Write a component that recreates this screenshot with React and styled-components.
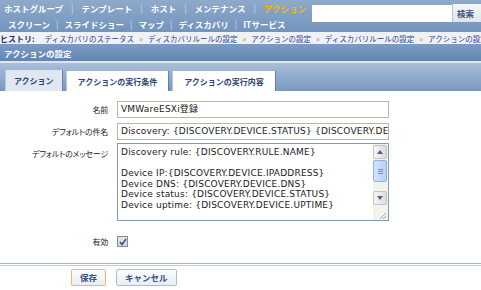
import React from 'react'
import styled, { createGlobalStyle } from 'styled-components'

const GlobalStyle = createGlobalStyle`
    body {
        margin: 0;
        background: #ffffff;
        font-family: "Noto Sans CJK JP", "DejaVu Sans", sans-serif;
    }
`

const menu1 = ['ホストグループ', 'テンプレート', 'ホスト', 'メンテナンス', 'アクション']
const menu2 = ['スクリーン', 'スライドショー', 'マップ', 'ディスカバリ', 'ITサービス']
const history = ['ディスカバリのステータス', 'ディスカバリルールの設定', 'アクションの設定', 'ディスカバリルールの設定', 'アクションの設定']
const tabs = ['アクション', 'アクションの実行条件', 'アクションの実行内容']
const message = [
    'Discovery rule: {DISCOVERY.RULE.NAME}',
    '',
    'Device IP:{DISCOVERY.DEVICE.IPADDRESS}',
    'Device DNS: {DISCOVERY.DEVICE.DNS}',
    'Device status: {DISCOVERY.DEVICE.STATUS}',
    'Device uptime: {DISCOVERY.DEVICE.UPTIME}',
]

const App = () => {
    return (
        <Page>
            <GlobalStyle />
            <TopNav>
                <Menu>
                    <MenuRow>
                        {menu1.map(m => (
                            <React.Fragment key={m}>
                                <MenuItem active={m === 'アクション'}>{m}</MenuItem>
                                <Sep>|</Sep>
                            </React.Fragment>
                        ))}
                    </MenuRow>
                    <MenuRow second>
                        {menu2.map((m, i) => (
                            <React.Fragment key={m}>
                                {i > 0 && <Sep narrow>|</Sep>}
                                <MenuItem>{m}</MenuItem>
                            </React.Fragment>
                        ))}
                    </MenuRow>
                </Menu>
                <Search>
                    <SearchInput />
                    <SearchButton>検索</SearchButton>
                </Search>
            </TopNav>
            <History>
                <HistoryLabel>ヒストリ:</HistoryLabel>
                {history.map((h, i) => (
                    <React.Fragment key={i}>
                        {i > 0 && <Arrow>»</Arrow>}
                        <HistoryLink>{h}</HistoryLink>
                    </React.Fragment>
                ))}
            </History>
            <Header>アクションの設定</Header>
            <TabBar>
                {tabs.map((t, i) => (
                    <Tab key={t} active={i === 0}>{t}</Tab>
                ))}
            </TabBar>
            <Form>
                <Label>名前</Label>
                <Input>VMWareESXi登録</Input>
                <Label>デフォルトの件名</Label>
                <Input>Discovery: {'{DISCOVERY.DEVICE.STATUS} {DISCOVERY.DEVICE.IPADDRESS}'}</Input>
                <Label>デフォルトのメッセージ</Label>
                <TextArea>
                    <TextBody>
                        {message.map((l, i) => (
                            <Line key={i}>{l || '\u00a0'}</Line>
                        ))}
                    </TextBody>
                    <Scroll>
                        <ScrollBtn>
                            <svg width="6" height="4" viewBox="0 0 6 4"><path d="M0 4 L3 0 L6 4 Z" fill="#4d6185" /></svg>
                        </ScrollBtn>
                        <Thumb>
                            <ThumbLine />
                            <ThumbLine />
                            <ThumbLine />
                        </Thumb>
                        <Track />
                        <ScrollBtn>
                            <svg width="6" height="4" viewBox="0 0 6 4"><path d="M0 0 L3 4 L6 0 Z" fill="#4d6185" /></svg>
                        </ScrollBtn>
                        <Grip>
                            <svg width="8" height="8" viewBox="0 0 8 8">
                                <path d="M7 1 L1 7 M7 4 L4 7" stroke="#a8a8a0" strokeWidth="1" />
                            </svg>
                        </Grip>
                    </Scroll>
                </TextArea>
                <CheckLabel>有効</CheckLabel>
                <CheckRow>
                    <Check>
                        <svg width="8" height="8" viewBox="0 0 8 8">
                            <path d="M1 4 L3 6.5 L7 1" stroke="#2b4ea8" strokeWidth="1.5" fill="none" />
                        </svg>
                    </Check>
                </CheckRow>
            </Form>
            <Footer>
                <Button primary>保存</Button>
                <Button>キャンセル</Button>
            </Footer>
        </Page>
    )
}

export default App

const Page = styled.div`
    width: 481px;
    height: 290px;
    overflow: hidden;
    background: #ffffff;
`
const TopNav = styled.div`
    display: flex;
    align-items: flex-start;
    height: 32px;
    background: linear-gradient(#8eaacb, #7394bc);
`
const Menu = styled.div`
    width: 312px;
    display: flex;
    flex-direction: column;
`
const MenuRow = styled.div`
    display: flex;
    align-items: center;
    height: 16px;
    padding-left: ${p => (p.second ? '8px' : '4px')};
`
const MenuItem = styled.span`
    font-size: 8.5px;
    font-weight: bold;
    color: ${p => (p.active ? '#f5b800' : '#ffffff')};
    white-space: nowrap;
`
const Sep = styled.span`
    font-size: 9px;
    color: #c9d7e8;
    padding: 0 ${p => (p.narrow ? '6px' : '8px')};
`
const Search = styled.div`
    display: flex;
    margin-top: 4px;
    height: 18px;
`
const SearchInput = styled.div`
    width: 140px;
    background: #ffffff;
    border-top: 1px solid #8da4c2;
`
const SearchButton = styled.div`
    width: 29px;
    background: linear-gradient(#f4f6f9, #dfe5ec);
    border-left: 1px solid #b8c4d4;
    color: #3a5378;
    font-size: 8.5px;
    font-weight: bold;
    display: flex;
    align-items: center;
    padding-left: 4px;
`
const History = styled.div`
    display: flex;
    align-items: center;
    height: 12px;
    background: #eef2f7;
    white-space: nowrap;
    overflow: hidden;
`
const HistoryLabel = styled.span`
    font-size: 8px;
    font-weight: bold;
    color: #1e2f6e;
    margin-right: 10px;
`
const HistoryLink = styled.span`
    font-size: 7.5px;
    color: #2f3c8a;
`
const Arrow = styled.span`
    font-size: 8px;
    color: #c58a4a;
    margin: 0 5px;
`
const Header = styled.div`
    height: 17px;
    display: flex;
    align-items: center;
    padding-left: 4px;
    background: linear-gradient(#7c9cc3, #6184b1);
    color: #ffffff;
    font-size: 8.5px;
    font-weight: bold;
    border-bottom: 2px solid #dbe4ef;
`
const TabBar = styled.div`
    display: flex;
    align-items: flex-end;
    gap: 3px;
    height: 28px;
    padding-left: 5px;
    background: linear-gradient(#a9bfd9, #7898c0);
`
const Tab = styled.div`
    height: ${p => (p.active ? '21px' : '20px')};
    padding: 0 ${p => (p.active ? '8px' : '11px')};
    display: flex;
    align-items: center;
    background: ${p => (p.active ? '#dfe7f1' : '#ffffff')};
    border-left: 1px solid #b7c8dc;
    border-right: 1px solid #5f82ad;
    color: #2b4677;
    font-size: 8px;
    font-weight: bold;
`
const Form = styled.div`
    display: grid;
    grid-template-columns: 108px 272px;
    column-gap: 9px;
    row-gap: 5px;
    padding-top: 10px;
    align-items: start;
`
const Label = styled.div`
    text-align: right;
    font-size: 8px;
    font-feature-settings: "palt";
    letter-spacing: -0.2px;
    color: #222222;
    line-height: 17px;
`
const Input = styled.div`
    height: 15px;
    border: 1px solid #b9b7aa;
    padding-left: 3px;
    font-family: "DejaVu Sans", "Noto Sans CJK JP", sans-serif;
    font-size: 9px;
    letter-spacing: 0.2px;
    line-height: 15px;
    color: #1a1a1a;
    white-space: nowrap;
    overflow: hidden;
`
const TextArea = styled.div`
    height: 76px;
    border: 1px solid #7f9db9;
    display: flex;
    margin-top: -2px;
`
const TextBody = styled.div`
    flex: 1;
    padding: 3px 3px;
    overflow: hidden;
`
const Line = styled.div`
    font-family: "DejaVu Sans", sans-serif;
    font-size: 9px;
    letter-spacing: 0.2px;
    line-height: 10.5px;
    color: #1a1a1a;
    white-space: nowrap;
`
const Scroll = styled.div`
    width: 14px;
    display: flex;
    flex-direction: column;
    background: #f3f3ee;
    padding: 1px 1px 0 0;
`
const ScrollBtn = styled.div`
    height: 12px;
    display: flex;
    align-items: center;
    justify-content: center;
    background: linear-gradient(90deg, #f6f6f6, #dcdcdc);
    border: 1px solid #c3c3c3;
    border-radius: 2px;
`
const Thumb = styled.div`
    height: 20px;
    margin-top: 1px;
    display: flex;
    flex-direction: column;
    align-items: center;
    justify-content: center;
    gap: 1px;
    background: linear-gradient(90deg, #d6e4fb, #b9d0f5);
    border: 1px solid #8fb0e4;
    border-radius: 2px;
`
const ThumbLine = styled.div`
    width: 5px;
    height: 1px;
    background: #6f8fc8;
`
const Track = styled.div`
    flex: 1;
`
const Grip = styled.div`
    height: 15px;
    display: flex;
    align-items: flex-end;
    justify-content: flex-end;
`
const CheckLabel = styled(Label)`
    margin-top: 7px;
`
const CheckRow = styled.div`
    margin-top: 10px;
`
const Check = styled.div`
    width: 9px;
    height: 9px;
    border: 1px solid #8d8d8d;
    background: linear-gradient(#e6e6e6, #d2d2d2);
    display: flex;
    align-items: center;
    justify-content: center;
`
const Footer = styled.div`
    margin-top: 13px;
    height: 26px;
    border-top: 1px solid #a7b7cb;
    border-bottom: 1px solid #a7b7cb;
    box-shadow: inset 0 1px 0 #ffffff, inset 0 2px 0 #c0ccda;
    display: flex;
    align-items: center;
    gap: 10px;
    padding-left: 71px;
`
const Button = styled.div`
    height: 15px;
    padding: 0 8px;
    display: flex;
    align-items: center;
    background: linear-gradient(#fbfcfd, #e9eef4);
    border: 1px solid ${p => (p.primary ? '#f2b866' : '#aebdd0')};
    border-radius: 2px;
    color: #35507b;
    font-size: 8.5px;
    font-weight: bold;
`
